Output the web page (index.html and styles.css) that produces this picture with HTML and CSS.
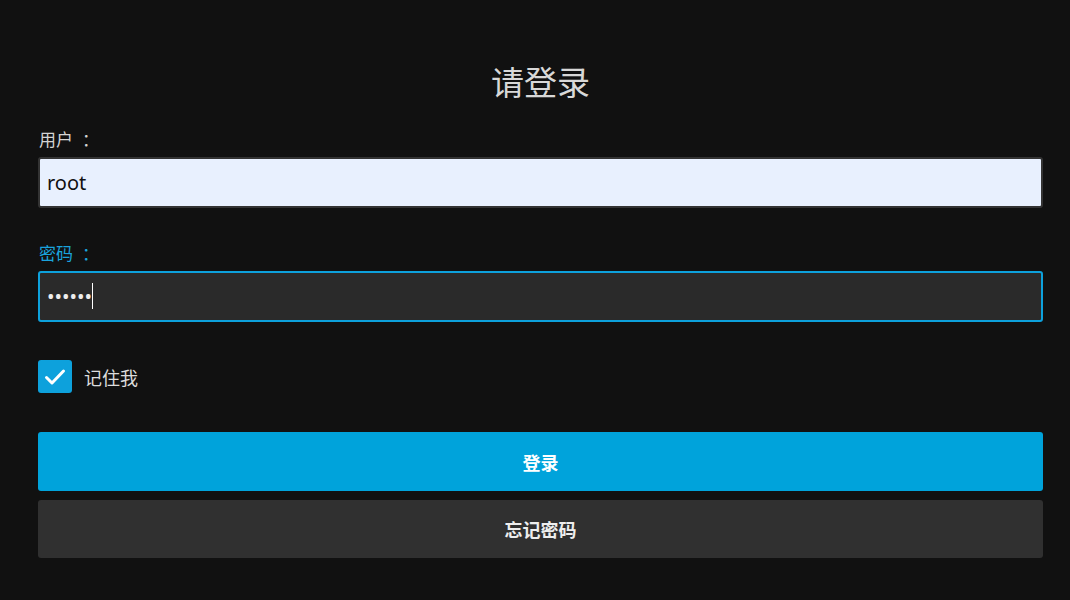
FILE: index.html
```html
<!DOCTYPE html>
<html lang="zh-CN">
  <head>
    <meta charset="utf-8" />
    <meta name="viewport" content="width=device-width, initial-scale=1.0" />
    <title>请登录</title>
    <link rel="stylesheet" href="styles.css">
  </head>
  <body>
    <form class="login">
      <h1 class="title">请登录</h1>
      <div class="field">
        <label for="user">用户<span class="colon">：</span></label>
        <input type="text" id="user" class="user-input" value="root" />
      </div>
      <div class="field">
        <label for="pass">密码<span class="colon">：</span></label>
        <div class="input-wrap">
          <input type="password" id="pass" value="123456" autofocus />
          <span class="caret"></span>
        </div>
      </div>
      <label class="remember">
        <input type="checkbox" checked />
        <span class="box">
          <svg viewBox="0 0 24 24" width="24" height="24">
            <path d="M3.5 12.5l5.5 5.5 11.5-12" fill="none" stroke="#fff" stroke-width="3" stroke-linecap="round" stroke-linejoin="round" />
          </svg>
        </span>
        <span>记住我</span>
      </label>
      <div class="actions">
        <button type="button" class="btn primary">登录</button>
        <button type="button" class="btn secondary">忘记密码</button>
      </div>
    </form>
  </body>
</html>
```

FILE: styles.css
```css
* {
  padding: 0;
  margin: 0;
  box-sizing: border-box;
  font-family: "Noto Sans", "Noto Sans CJK SC", sans-serif;
}
body {
  background-color: #111111;
  color: #dddddd;
}
.login {
  width: 1005px;
  margin-left: 38px;
  padding-top: 58px;
  display: flex;
  flex-direction: column;
}
.title {
  font-size: 33px;
  font-weight: 400;
  line-height: 50px;
  text-align: center;
  color: #d8d8d8;
  margin-bottom: 19px;
}
.field {
  display: flex;
  flex-direction: column;
  margin-bottom: 33px;
}
.field label {
  font-size: 17px;
  line-height: 26px;
  padding-left: 1px;
  margin-bottom: 4px;
  color: #d4d4d4;
}
.colon {
  padding-left: 9px;
}
.field:focus-within label {
  color: #1aa3dd;
}
.field input {
  width: 100%;
  height: 51px;
  border: 2px solid #333333;
  border-radius: 3px;
  background-color: #2a2a2a;
  color: #eeeeee;
  font-size: 20px;
  padding: 0 7px;
  outline: none;
}
.field input:focus {
  border-color: #0da1dc;
}
.field .user-input {
  background-color: #e8f0fe;
  color: #111111;
}
.input-wrap {
  position: relative;
}
.field input[type="password"] {
  font-size: 20px;
  caret-color: transparent;
}
.caret {
  position: absolute;
  left: 54px;
  top: 12px;
  width: 1px;
  height: 26px;
  background-color: #ffffff;
}
.remember {
  display: flex;
  align-items: center;
  gap: 12px;
  margin-top: 5px;
  font-size: 18px;
  color: #dddddd;
}
.remember input {
  display: none;
}
.remember .box {
  width: 34px;
  height: 33px;
  border-radius: 3px;
  background-color: #0da1dc;
  display: grid;
  place-items: center;
}
.actions {
  margin-top: 39px;
  display: flex;
  flex-direction: column;
  gap: 9px;
}
.btn {
  border: none;
  border-radius: 3px;
  font-size: 18px;
  font-weight: 700;
  cursor: pointer;
}
.primary {
  height: 59px;
  background-color: #00a3db;
  color: #ffffff;
}
.secondary {
  height: 58px;
  background-color: #303030;
  color: #eeeeee;
}
```
